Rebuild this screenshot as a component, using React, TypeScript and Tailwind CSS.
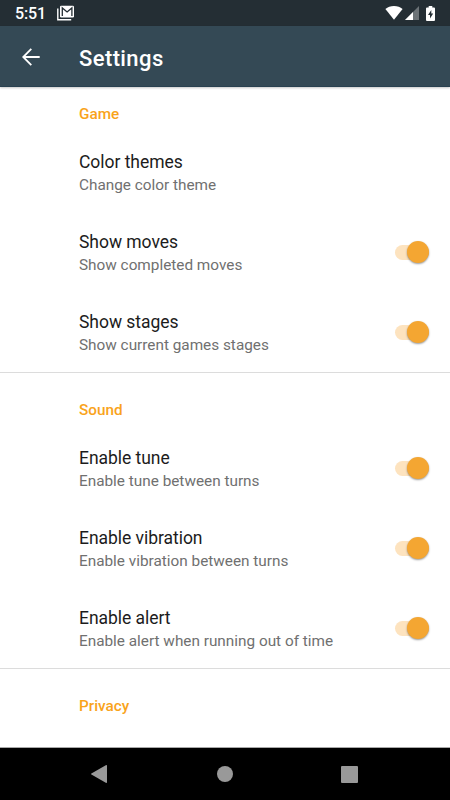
import * as React from 'react';

interface Item {
  title: string;
  summary: string;
  toggle?: boolean;
}

interface Section {
  name: string;
  items: Item[];
}

const sections: Section[] = [
  {
    name: 'Game',
    items: [
      { title: 'Color themes', summary: 'Change color theme' },
      { title: 'Show moves', summary: 'Show completed moves', toggle: true },
      { title: 'Show stages', summary: 'Show current games stages', toggle: true },
    ],
  },
  {
    name: 'Sound',
    items: [
      { title: 'Enable tune', summary: 'Enable tune between turns', toggle: true },
      { title: 'Enable vibration', summary: 'Enable vibration between turns', toggle: true },
      { title: 'Enable alert', summary: 'Enable alert when running out of time', toggle: true },
    ],
  },
  { name: 'Privacy', items: [] },
];

function StatusBar() {
  return (
    <div className="flex h-[26px] shrink-0 items-center bg-[#242e34] pl-[15px] pr-[15px] text-white">
      <span className="w-[42px] pt-[2px] text-[16px] leading-[26px] font-medium tracking-[-0.1px]">5:51</span>
      {/* stacked mail notification */}
      <svg className="h-[16px] w-[18px]" viewBox="0 0 18 16" fill="none">
        <path d="M.8 3.500v11.200h13.400" stroke="#fff" strokeWidth="1.4" />
        <rect x="3" y=".8" width="14" height="11.700" rx="1.200" fill="#fff" />
        <path d="M5.300 11V3l4.800 4 4.800-4v8" stroke="#242e34" strokeWidth="1.300" />
      </svg>
      <div className="ml-auto flex items-center">
        <svg className="h-[14px] w-[18px]" viewBox="0 0 18 14" fill="#fff">
          <path d="M9 13.7.4 3.1C2.700 1.200 5.600.1 9 .1s6.300 1.100 8.600 3z" />
        </svg>
        <svg className="ml-[2px] h-[14px] w-[14px]" viewBox="0 0 14 14">
          <path d="M0 14 14 0v14z" fill="#6b7276" />
          <path d="M0 14 8 6V14z" fill="#fff" />
        </svg>
        <svg className="ml-[7px] h-[15px] w-[9px]" viewBox="0 0 9 15">
          <path d="M2.700 0h3.600v1.400H8q1 0 1 1V14q0 1-1 1H1q-1 0-1-1V2.400q0-1 1-1h1.700z" fill="#fff" />
          <path d="M5.300 4 2 9h2v3.600L7.200 7.600H5.300z" fill="#242e34" />
        </svg>
      </div>
    </div>
  );
}

function AppBar() {
  return (
    <header className="z-10 flex h-[61px] shrink-0 items-center border-b border-[#294150] bg-[#344955] pl-[22px] text-white shadow-[0_1px_2px_rgba(0,0,0,0.22)]">
      <button aria-label="Back" className="flex w-[57px] pt-[1px]">
        <svg className="h-[18px] w-[18px]" viewBox="0 0 18 18" fill="none" stroke="#fff" strokeWidth="1.8">
          <path d="M17.700 9H1.500M9.300.8 1.200 9l8.100 8.200" />
        </svg>
      </button>
      <h1 className="pt-[5px] text-[22px] leading-[26px] font-medium tracking-[0.4px]">Settings</h1>
    </header>
  );
}

function Toggle({ on, onChange, label }: { on: boolean; onChange: () => void; label: string }) {
  return (
    <button
      role="switch"
      aria-checked={on}
      aria-label={label}
      onClick={onChange}
      className={`flex h-[15px] w-[34px] items-center rounded-full ${on ? 'justify-end bg-[#fde3bf]' : 'justify-start bg-[#b9b9b9]'}`}
    >
      <span
        className={`h-[22px] w-[22px] shrink-0 rounded-full shadow-[0_1px_2px_rgba(0,0,0,0.4)] ${on ? 'bg-[#f4a632]' : 'bg-[#f1f1f1]'}`}
      />
    </button>
  );
}

function Row({ item }: { item: Item }) {
  const [on, setOn] = React.useState(true);

  return (
    <div className="flex h-[80px] items-center justify-between pr-[21px] pl-[79px]">
      <div className="pt-[2px]">
        <div className="text-[17.5px] leading-[23px] tracking-[-0.04px] text-[#1c1c1c]">{item.title}</div>
        <div className="text-[15.34px] leading-[22px] text-[#707070]">{item.summary}</div>
      </div>
      {item.toggle && <Toggle on={on} onChange={() => setOn(!on)} label={item.title} />}
    </div>
  );
}

function NavBar() {
  return (
    <nav className="flex h-[53px] shrink-0 items-center justify-between border-t border-[#a8a8a8] bg-black pr-[92px] pl-[91px]">
      <svg className="h-[18px] w-[16px]" viewBox="0 0 16 18" fill="#999">
        <path d="M.4 8.400 14.800.2Q16-.2 16 .8v16.400q0 1-1.200.6L.4 9.600q-.8-.6 0-1.200z" />
      </svg>
      <span className="ml-[1px] h-4 w-4 rounded-full bg-[#999]" />
      <span className="h-[17px] w-[17px] rounded-[1px] bg-[#999]" />
    </nav>
  );
}

export default function App() {
  return (
    <div className="flex h-[800px] w-[450px] flex-col overflow-hidden bg-white font-['Roboto','Liberation_Sans',sans-serif]">
      <StatusBar />
      <AppBar />
      <main className="min-h-0 flex-1 overflow-hidden">
        {sections.map((section, i) => (
          <section key={section.name} className={i > 0 ? 'border-t border-[#dcdcdc] pt-[10px]' : ''}>
            <h2 className="h-[45px] pt-[16px] pl-[79px] text-[15.3px] leading-[22px] font-medium text-[#f9a31b]">
              {section.name}
            </h2>
            {section.items.map((item) => (
              <Row key={item.title} item={item} />
            ))}
          </section>
        ))}
      </main>
      <NavBar />
    </div>
  );
}
